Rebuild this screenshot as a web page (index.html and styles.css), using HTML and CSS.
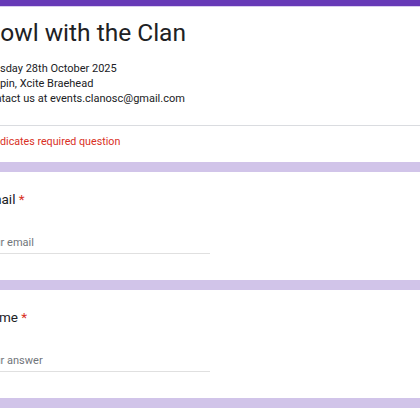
FILE: index.html
```html
<!DOCTYPE html>
<html lang="en">
<head>
<meta charset="utf-8">
<title>Bowl with the Clan</title>
<link rel="stylesheet" href="styles.css">
</head>
<body>
<div class="page">
  <section class="card header-card">
    <div class="accent"></div>
    <div class="header-body">
      <h1 class="title">Bowl with the Clan</h1>
      <div class="desc">
        <div>Tuesday 28th October 2025</div>
        <div>Tenpin, Xcite Braehead</div>
        <div>Contact us at events.clanosc@gmail.com</div>
      </div>
    </div>
    <div class="required-note"><span>* Indicates required question</span></div>
  </section>

  <section class="card question">
    <div class="q-body">
      <div class="label">Email <span class="star">*</span></div>
      <div class="input">Your email</div>
    </div>
  </section>

  <section class="card question">
    <div class="q-body">
      <div class="label">Name <span class="star">*</span></div>
      <div class="input">Your answer</div>
    </div>
  </section>

  <section class="card question">
    <div class="q-body">
      <div class="label">&nbsp;</div>
    </div>
  </section>
</div>
</body>
</html>
```
FILE: styles.css
```css
html, body {
  margin: 0;
  padding: 0;
  background: #d1c4e9;
  overflow: hidden;
}
body {
  font-family: Roboto, "Liberation Sans", Arial, sans-serif;
  color: #202124;
}
.page {
  display: flex;
  flex-direction: column;
  gap: 10px;
  width: 440px;
}
.card {
  background: #ffffff;
}
.accent {
  height: 6px;
  background: #673ab7;
  border-bottom: 1px solid #d9cdef;
}
.header-body {
  margin-left: -18px;
  padding-top: 10px;
  padding-bottom: 19px;
}
.title {
  margin: 0 0 12px 3px;
  font-size: 24.5px;
  line-height: 32px;
  font-weight: 400;
  color: #202124;
}
.desc {
  font-size: 11px;
  line-height: 15px;
  color: #202124;
}
.required-note {
  border-top: 1px solid #dadce0;
  padding: 8px 0 12px 0;
}
.required-note span {
  display: block;
  margin-left: -16px;
  font-size: 10.7px;
  line-height: 16px;
  color: #d93025;
}
.q-body {
  margin-left: -18px;
  padding-top: 17px;
  padding-bottom: 26px;
}
.label {
  font-size: 13.5px;
  line-height: 20px;
  color: #202124;
}
.star {
  color: #d93025;
}
.input {
  margin-top: 24px;
  width: 228px;
  font-size: 11px;
  line-height: 20px;
  letter-spacing: 0;
  color: #70757a;
  border-bottom: 1px solid #e0e0e0;
}
```
